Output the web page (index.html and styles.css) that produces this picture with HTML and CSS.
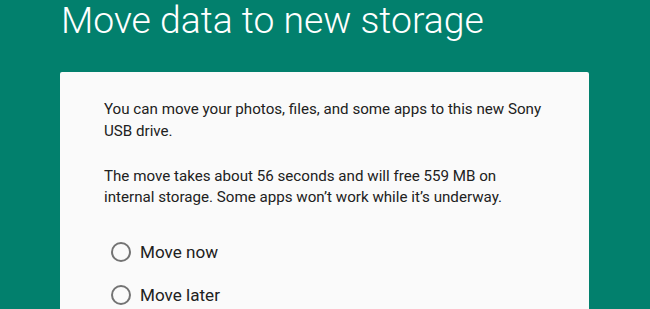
FILE: index.html
```html
<!DOCTYPE html>
<html>
<head>
<meta charset="utf-8">
<link rel="stylesheet" href="styles.css">
</head>
<body>
<div class="page">
  <h1 class="title">Move data to new storage</h1>
  <div class="card">
    <p class="text">You can move your photos, files, and some apps to this new Sony<br>USB drive.</p>
    <p class="text">The move takes about 56 seconds and will free 559 MB on<br>internal storage. Some apps won’t work while it’s underway.</p>
    <div class="options">
      <label class="option"><span class="radio"></span><span class="label">Move now</span></label>
      <label class="option"><span class="radio"></span><span class="label">Move later</span></label>
    </div>
  </div>
</div>
</body>
</html>
```
FILE: styles.css
```css
html, body {
  margin: 0;
  padding: 0;
  height: 100%;
  overflow: hidden;
}
body {
  background: #02806d;
  font-family: Roboto, "Noto Sans", sans-serif;
}
.page {
  padding: 0 61px 0 60px;
}
.title {
  margin: 0;
  padding: 0 0 0 1px;
  font-size: 37.3px;
  font-weight: 300;
  line-height: 40px;
  color: #ffffff;
  height: 72px;
  box-sizing: border-box;
  white-space: nowrap;
}
.card {
  background: #fafafa;
  border-radius: 2px;
  padding: 27px 20px 0 44px;
  height: 400px;
}
.text {
  margin: 0 0 23.3px 0;
  font-size: 15.15px;
  line-height: 21.7px;
  color: #212121;
  white-space: nowrap;
}
.options {
  display: flex;
  flex-direction: column;
  gap: 21.4px;
  padding-left: 7px;
  padding-top: 8.4px;
}
.option {
  display: flex;
  align-items: center;
  gap: 9px;
  height: 22px;
}
.radio {
  width: 16px;
  height: 16px;
  border: 2px solid #737373;
  border-radius: 50%;
  flex: none;
}
.label {
  font-size: 17.1px;
  line-height: 22px;
  color: #212121;
}
```
